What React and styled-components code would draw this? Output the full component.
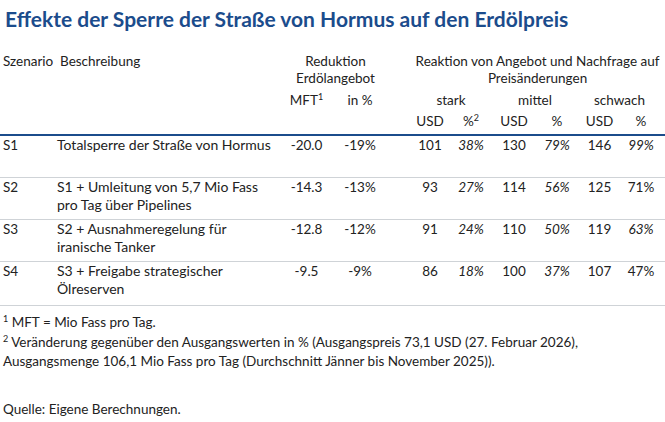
import React from 'react';
import styled, { createGlobalStyle } from 'styled-components';

const GlobalStyle = createGlobalStyle`
  body {
    margin: 0;
    background: #fff;
    font-family: Lato, 'Open Sans', sans-serif;
    color: #222;
  }
`;

const Page = styled.div`
  width: 665px;
  height: 422px;
  overflow: hidden;
`;

const Title = styled.h1`
  margin: 0;
  padding: 6px 0 0 5px;
  font-size: 21px;
  line-height: 25px;
  font-weight: 700;
  color: #1b4c8c;
`;

const Table = styled.table`
  width: 665px;
  margin-top: 22px;
  border-collapse: collapse;
  table-layout: fixed;
  font-size: 13.5px;
`;

const Th = styled.th`
  font-weight: 400;
  padding: 0;
  line-height: 17px;
  vertical-align: top;
  text-align: ${(p) => p.align || 'center'};
  padding-left: ${(p) => p.pl || 0}px;
  padding-top: ${(p) => p.pt || 0}px;
  white-space: nowrap;
`;

const HeadRow = styled.tr`
  border-bottom: ${(p) => (p.last ? '2px solid #1b4c8c' : 'none')};
  height: ${(p) => p.h}px;
`;

const BodyRow = styled.tr`
  height: ${(p) => p.h || 42}px;
  border-bottom: 1px solid #cfd3d7;
`;

const Td = styled.td`
  padding: 0;
  padding-left: ${(p) => p.pl || 0}px;
  padding-right: ${(p) => p.pr || 0}px;
  line-height: 18px;
  vertical-align: top;
  text-align: ${(p) => p.align || 'center'};
  font-style: ${(p) => (p.italic ? 'italic' : 'normal')};
  white-space: ${(p) => (p.wrap ? 'normal' : 'nowrap')};
`;

const Desc = styled(Td)`
  font-size: 14px;
`;

const Sup = styled.sup`
  font-size: 9px;
  line-height: 0;
  vertical-align: 5px;
`;

const Notes = styled.div`
  padding: 7px 0 0 3px;
  font-size: 13.5px;
  line-height: 19px;
`;

const Note = styled.p`
  margin: 0 0 ${(p) => p.mb || 1}px 0;
`;

const rows = [
  {
    id: 'S1',
    text: 'Totalsperre der Straße von Hormus',
    mft: '-20.0',
    pct: '-19%',
    vals: [['101', '38%', true], ['130', '79%', true], ['146', '99%', true]],
  },
  {
    id: 'S2',
    text: 'S1 + Umleitung von 5,7 Mio Fass pro Tag über Pipelines',
    mft: '-14.3',
    pct: '-13%',
    vals: [['93', '27%', true], ['114', '56%', true], ['125', '71%', false]],
  },
  {
    id: 'S3',
    text: 'S2 + Ausnahmeregelung für iranische Tanker',
    mft: '-12.8',
    pct: '-12%',
    vals: [['91', '24%', true], ['110', '50%', true], ['119', '63%', true]],
  },
  {
    id: 'S4',
    text: 'S3 + Freigabe strategischer Ölreserven',
    mft: '-9.5',
    pct: '-9%',
    vals: [['86', '18%', true], ['100', '37%', true], ['107', '47%', false]],
    h: 44,
  },
];

const widths = [57, 225, 49, 58, 21, 40, 42, 44, 42, 43, 40, 4];

export default function App() {
  return (
    <Page>
      <GlobalStyle />
      <Title>Effekte der Sperre der Straße von Hormus auf den Erdölpreis</Title>
      <Table>
        <colgroup>
          {widths.map((w, i) => (
            <col key={i} style={{ width: w }} />
          ))}
        </colgroup>
        <thead>
          <HeadRow h={35}>
            <Th align="left" pl={3}>Szenario</Th>
            <Th align="left" pl={3}>Beschreibung</Th>
            <Th colSpan={2}>
              Reduktion
              <br />
              Erdölangebot
            </Th>
            <Th />
            <Th colSpan={7}>
              Reaktion von Angebot und Nachfrage auf
              <br />
              Preisänderungen
            </Th>
          </HeadRow>
          <HeadRow h={21}>
            <Th />
            <Th />
            <Th pt={4}>
              MFT<Sup>1</Sup>
            </Th>
            <Th pt={4}>in %</Th>
            <Th />
            <Th pt={4} colSpan={2}>stark</Th>
            <Th pt={4} colSpan={2}>mittel</Th>
            <Th pt={4} colSpan={2}>schwach</Th>
            <Th />
          </HeadRow>
          <HeadRow h={26} last>
            <Th />
            <Th />
            <Th />
            <Th />
            <Th />
            <Th pt={4}>USD</Th>
            <Th pt={4}>
              %<Sup>2</Sup>
            </Th>
            <Th pt={4}>USD</Th>
            <Th pt={4}>%</Th>
            <Th pt={4}>USD</Th>
            <Th pt={4}>%</Th>
            <Th />
          </HeadRow>
        </thead>
        <tbody>
          {rows.map((r) => (
            <BodyRow key={r.id} h={r.h}>
              <Td align="left" pl={3}>{r.id}</Td>
              <Desc align="left" pr={5} wrap>{r.text}</Desc>
              <Td>{r.mft}</Td>
              <Td>{r.pct}</Td>
              <Td />
              {r.vals.map(([usd, pc, it], i) => (
                <React.Fragment key={i}>
                  <Td>{usd}</Td>
                  <Td italic={it}>{pc}</Td>
                </React.Fragment>
              ))}
              <Td />
            </BodyRow>
          ))}
        </tbody>
      </Table>
      <Notes>
        <Note>
          <Sup>1</Sup> MFT = Mio Fass pro Tag.
        </Note>
        <Note mb={29}>
          <Sup>2</Sup> Veränderung gegenüber den Ausgangswerten in % (Ausgangspreis 73,1 USD (27. Februar 2026),
          <br />
          Ausgangsmenge 106,1 Mio Fass pro Tag (Durchschnitt Jänner bis November 2025)).
        </Note>
        <Note>Quelle: Eigene Berechnungen.</Note>
      </Notes>
    </Page>
  );
}
